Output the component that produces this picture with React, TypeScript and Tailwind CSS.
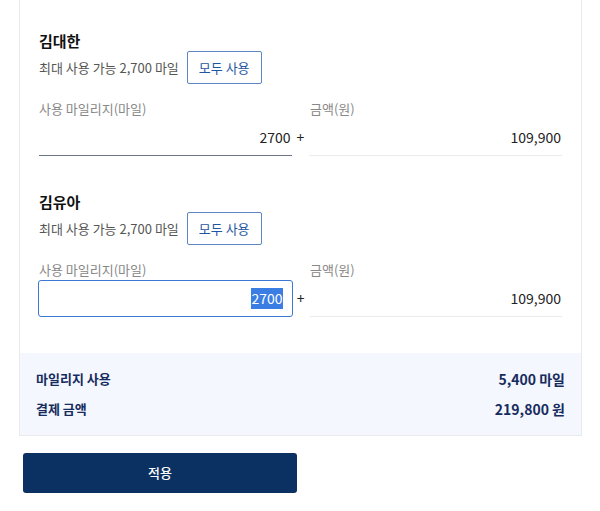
const FONT = "font-['Noto_Sans_CJK_KR','Noto_Sans',sans-serif]";

type Passenger = {
  name: string;
  max: string;
  mileage: string;
  amount: string;
  focused?: boolean;
};

const passengers: Passenger[] = [
  { name: "김대한", max: "2,700", mileage: "2700", amount: "109,900" },
  { name: "김유아", max: "2,700", mileage: "2700", amount: "109,900", focused: true },
];

function PassengerRow({ p }: { p: Passenger }) {
  return (
    <div className="px-[19px]">
      <div className="text-[15px] font-bold leading-[21px] text-[#111]">{p.name}</div>
      <div className="flex items-center gap-[8px]">
        <span className="text-[13px] text-[#555]">최대 사용 가능 {p.max} 마일</span>
        <button className="h-[33px] px-[11px] border border-[#5b86c4] rounded-[2px] text-[13px] text-[#1f56a0] bg-white">
          모두 사용
        </button>
      </div>
      <div className="flex mt-[16px] text-[13px] leading-[18px] text-[#888]">
        <div className="w-[253px]">사용 마일리지(마일)</div>
        <div className="ml-[18px]">금액(원)</div>
      </div>
      <div className="flex items-stretch mt-[1px] h-[37px]">
        {p.focused ? (
          <div className="w-[255px] -ml-px border border-[#3b78d4] rounded-[3px] flex items-center justify-end pr-[9px] text-[14px] text-[#222]">
            <span className="bg-[#3a7ee4] text-white">{p.mileage}</span>
          </div>
        ) : (
          <div className="w-[253px] border-b border-[#6b7787] flex items-center justify-end pr-px text-[14px] text-[#222]">
            {p.mileage}
          </div>
        )}
        <div className={`w-[18px] ${p.focused ? "-ml-px" : ""} flex items-center justify-center text-[14px] text-[#222]`}>+</div>
        <div className="w-[253px] border-b border-[#e9ebee] flex items-center justify-end pr-px text-[14px] text-[#222]">
          {p.amount}
        </div>
      </div>
    </div>
  );
}

export default function App() {
  return (
    <div className={`${FONT} bg-white w-[600px] h-[511px] overflow-hidden`}>
      <div className="ml-[19px] w-[563px] border-x border-b border-[#e8eaee] pt-[30px]">
        <PassengerRow p={passengers[0]} />
        <div className="h-[35px]" />
        <PassengerRow p={passengers[1]} />
        <div className="h-[36px]" />
        <div className="bg-[#f4f7fd] px-[16px] pt-[16px] pb-[16px] text-[#172c5e]">
          <div className="flex justify-between items-center h-[20px]">
            <span className="text-[13px] font-bold">마일리지 사용</span>
            <span className="text-[14px] font-bold">5,400 마일</span>
          </div>
          <div className="flex justify-between items-center h-[20px] mt-[10px]">
            <span className="text-[13px] font-bold">결제 금액</span>
            <span className="text-[14px] font-bold">219,800 원</span>
          </div>
        </div>
      </div>
      <button className="ml-[23px] mt-[17px] w-[274px] h-[40px] bg-[#0b3162] rounded-[3px] text-white text-[13px] font-medium">
        적용
      </button>
    </div>
  );
}
